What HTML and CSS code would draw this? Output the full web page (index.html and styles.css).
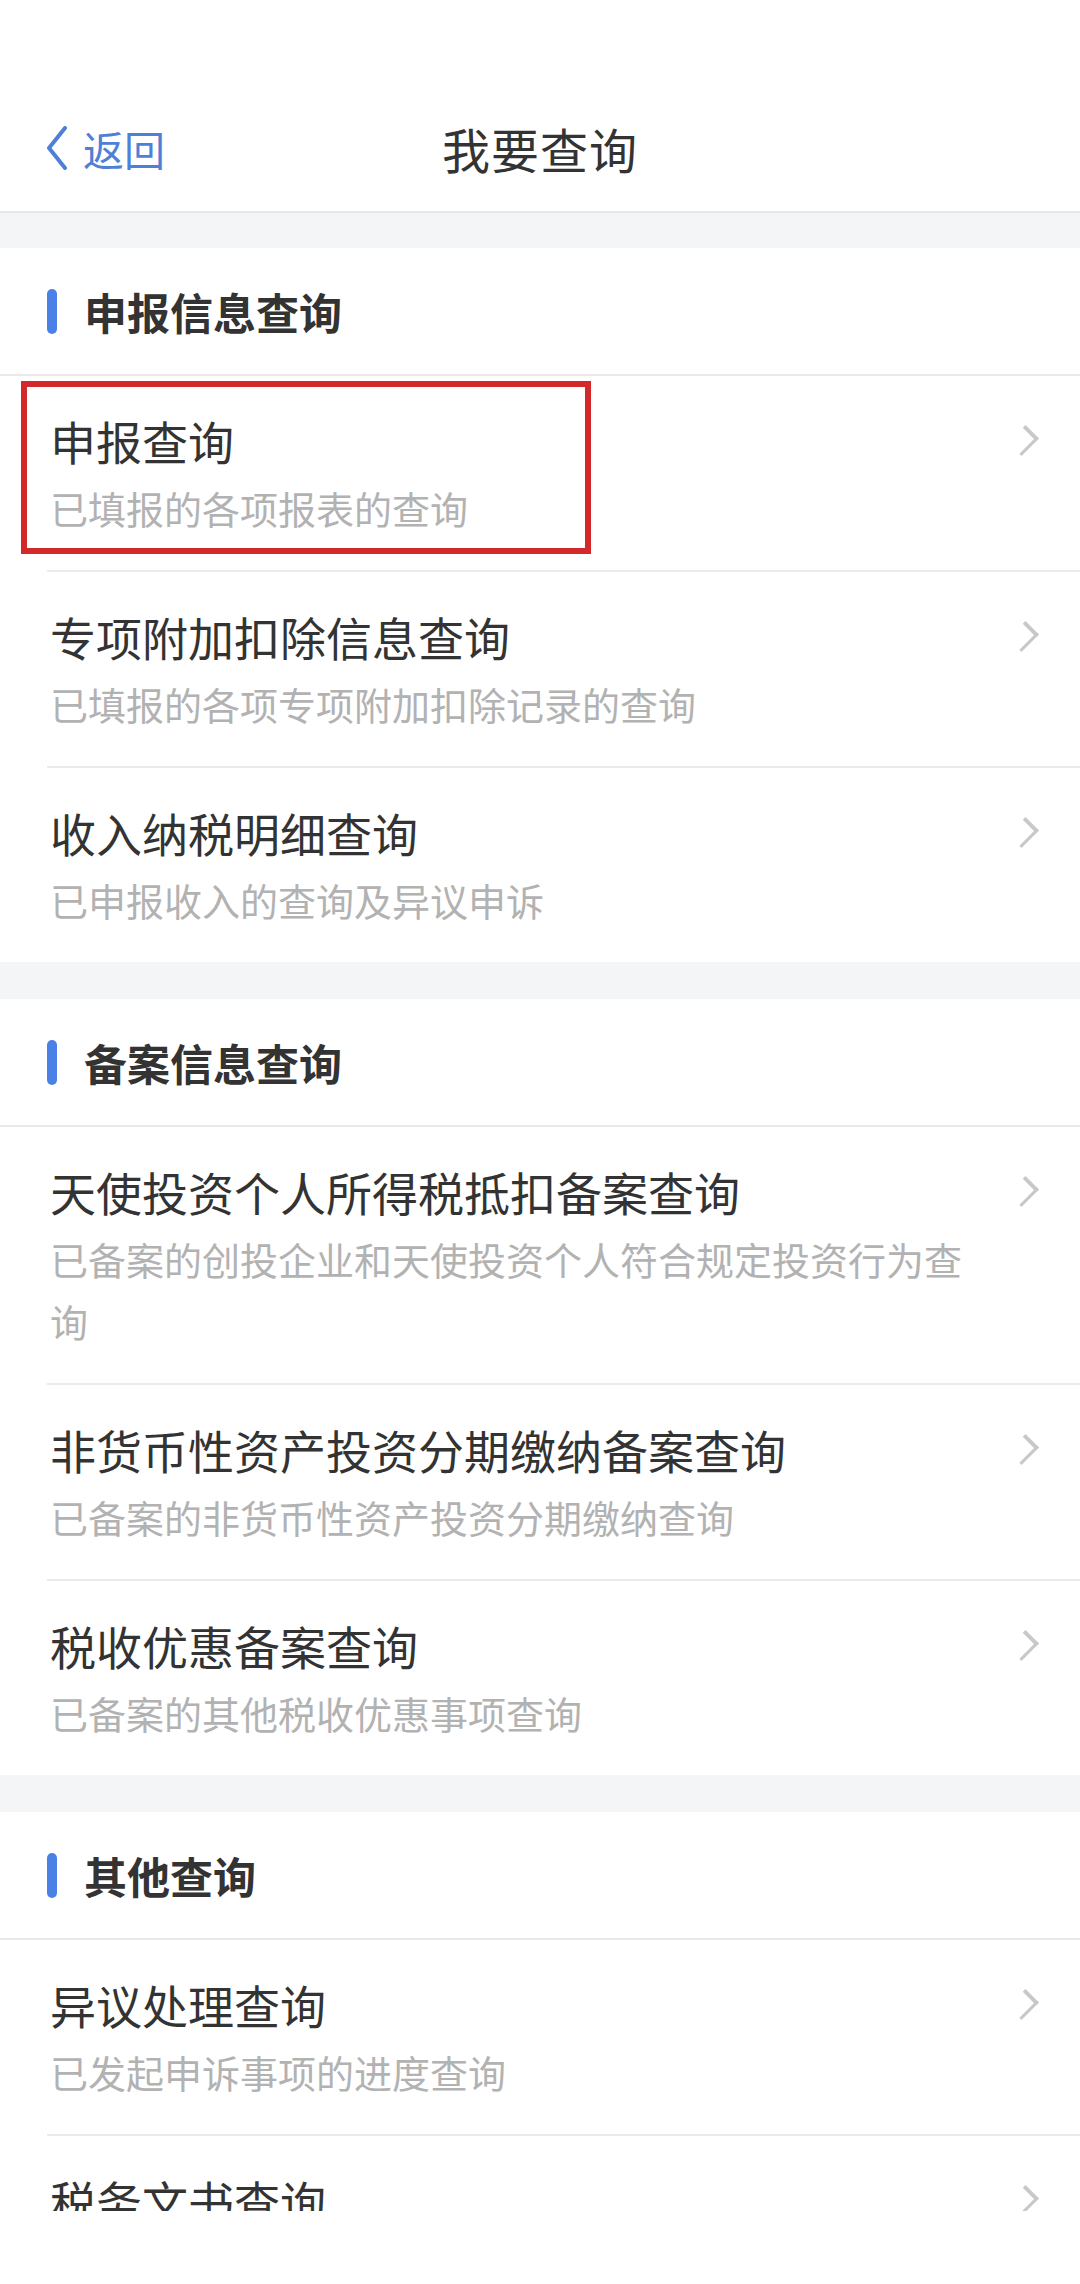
FILE: index.html
```html
<!DOCTYPE html>
<html>
<head>
    <meta name="viewport" content="width=device-width, initial-scale=1.0">
    <title>我要查询</title>
    <link rel="stylesheet" href="styles.css">
</head>
<body>
    <div class="screen">
        <div class="statusbar"></div>
        <div class="navbar">
            <a class="back" href="#">
                <svg width="24" height="44" viewBox="0 0 24 44"><path d="M20 2 L4 22 L20 42" fill="none" stroke="#4f7fd6" stroke-width="4" stroke-linecap="round" stroke-linejoin="round"/></svg>
                <span>返回</span>
            </a>
            <h1>我要查询</h1>
        </div>

        <div class="content">
            <div class="section">
                <h2 class="section-title">申报信息查询</h2>
                <a class="item marked" href="#">
                    <div class="text">
                        <div class="title">申报查询</div>
                        <div class="desc">已填报的各项报表的查询</div>
                    </div>
                    <span class="arrow"></span>
                </a>
                <a class="item" href="#">
                    <div class="text">
                        <div class="title">专项附加扣除信息查询</div>
                        <div class="desc">已填报的各项专项附加扣除记录的查询</div>
                    </div>
                    <span class="arrow"></span>
                </a>
                <a class="item" href="#">
                    <div class="text">
                        <div class="title">收入纳税明细查询</div>
                        <div class="desc">已申报收入的查询及异议申诉</div>
                    </div>
                    <span class="arrow"></span>
                </a>
            </div>

            <div class="section">
                <h2 class="section-title">备案信息查询</h2>
                <a class="item" href="#">
                    <div class="text">
                        <div class="title">天使投资个人所得税抵扣备案查询</div>
                        <div class="desc">已备案的创投企业和天使投资个人符合规定投资行为查询</div>
                    </div>
                    <span class="arrow"></span>
                </a>
                <a class="item" href="#">
                    <div class="text">
                        <div class="title">非货币性资产投资分期缴纳备案查询</div>
                        <div class="desc">已备案的非货币性资产投资分期缴纳查询</div>
                    </div>
                    <span class="arrow"></span>
                </a>
                <a class="item" href="#">
                    <div class="text">
                        <div class="title">税收优惠备案查询</div>
                        <div class="desc">已备案的其他税收优惠事项查询</div>
                    </div>
                    <span class="arrow"></span>
                </a>
            </div>

            <div class="section">
                <h2 class="section-title">其他查询</h2>
                <a class="item" href="#">
                    <div class="text">
                        <div class="title">异议处理查询</div>
                        <div class="desc">已发起申诉事项的进度查询</div>
                    </div>
                    <span class="arrow"></span>
                </a>
                <a class="item" href="#">
                    <div class="text">
                        <div class="title">税务文书查询</div>
                    </div>
                    <span class="arrow"></span>
                </a>
            </div>
        </div>
    </div>
</body>
</html>
```

FILE: styles.css
```css
body { margin: 0; background: #fff; font-family: "Noto Sans CJK SC", "Noto Sans", sans-serif; color: #333; }
a { text-decoration: none; color: inherit; }
.screen { width: 1080px; height: 2284px; overflow: hidden; background: #fff; }
.statusbar { height: 85px; }

/* nav */
.navbar { position: relative; height: 126px; display: flex; align-items: center; justify-content: center; border-bottom: 2px solid #e6e7ea; }
.navbar h1 { margin: 0; font-size: 48px; font-weight: 400; color: #333; letter-spacing: 1px; }
.back { position: absolute; left: 45px; top: 0; bottom: 0; display: flex; align-items: center; gap: 14px; color: #4f7fd6; font-size: 41px; }
.back svg { display: block; }

/* list, cut off at the bottom like the screenshot */
.content { height: 1998px; overflow: hidden; background: #f4f5f7; padding-top: 35px; box-sizing: border-box; }
.section { background: #fff; margin-bottom: 37px; }
.section-title { display: flex; align-items: center; height: 126px; margin: 0; padding-left: 47px; font-size: 43px; font-weight: 700; color: #333; border-bottom: 2px solid #e9e9eb; }
.section-title::before { content: ""; width: 10px; height: 45px; border-radius: 5px; background: #4b80e6; margin-right: 27px; }

.item { position: relative; display: flex; align-items: flex-start; margin-left: 47px; padding: 32px 47px 31px 3px; border-bottom: 2px solid #ebebed; }
.item:last-child { border-bottom: none; }
.item .text { flex: 1; }
.title { font-size: 46px; line-height: 64px; color: #333; }
.desc { margin-top: 5px; font-size: 38px; line-height: 62px; color: #b2b2b2; padding-right: 40px; }
.arrow { width: 16px; height: 16px; margin-top: 23px; border-top: 3px solid #c8c8c8; border-right: 3px solid #c8c8c8; transform: rotate(45deg) scaleY(1.3); }

/* red annotation box */
.marked::after { content: ""; position: absolute; left: -26px; top: 5px; width: 570px; height: 173px; border: 6px solid #d3292a; box-sizing: border-box; }
```
